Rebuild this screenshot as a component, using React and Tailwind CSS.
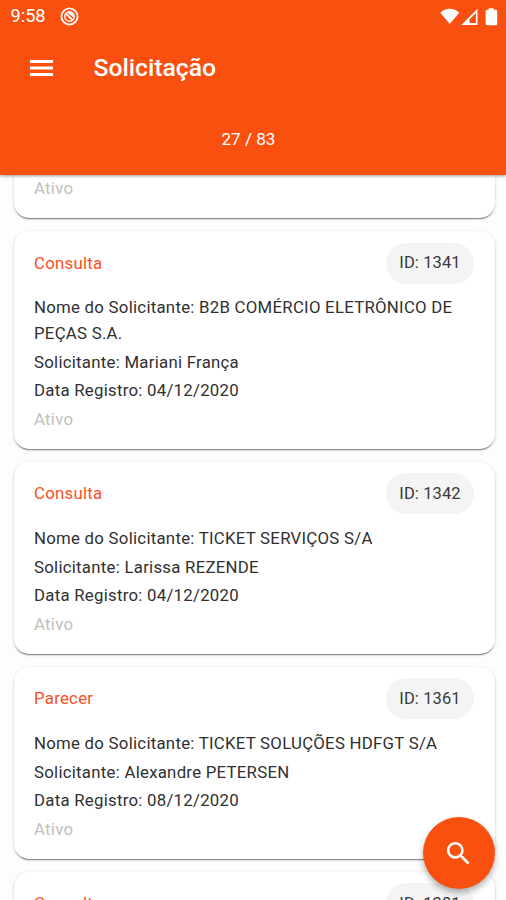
const requests = [
  {
    type: "Consulta",
    id: 1341,
    name: "B2B COMÉRCIO ELETRÔNICO DE PEÇAS S.A.",
    person: "Mariani França",
    date: "04/12/2020",
  },
  { type: "Consulta", id: 1342, name: "TICKET SERVIÇOS S/A", person: "Larissa REZENDE", date: "04/12/2020" },
  { type: "Parecer", id: 1361, name: "TICKET SOLUÇÕES HDFGT S/A", person: "Alexandre PETERSEN", date: "08/12/2020" },
  { type: "Consulta", id: 1381 },
];

const cardStyle =
  "shrink-0 rounded-[15px] bg-white px-[20.5px] shadow-[0_2px_1px_-1px_rgba(0,0,0,0.35),0_1px_2px_rgba(0,0,0,0.2),0_1px_4px_rgba(0,0,0,0.08)]";

function Line({ children, muted }) {
  return (
    <p className={`py-[1.4px] leading-[25.7px] ${muted ? "text-[#c0c0c0]" : "text-[#303030]"}`}>{children}</p>
  );
}

function Card({ item }) {
  return (
    <article className={`${cardStyle} pt-[11.8px] pb-[15px]`}>
      <div className="mb-[10.3px] flex h-[41px] items-center justify-between">
        <h2 className="text-[#fb4f24]">{item.type}</h2>
        <span className="flex h-[41px] w-[88px] items-center justify-center rounded-full bg-[#f4f4f4] pt-[1px] text-[16.5px] tracking-[0.1px] text-[#3a3a3a]">
          {`ID: ${item.id}`}
        </span>
      </div>
      {item.name && (
        <>
          <Line>{`Nome do Solicitante: ${item.name}`}</Line>
          <Line>{`Solicitante: ${item.person}`}</Line>
          <Line>{`Data Registro: ${item.date}`}</Line>
          <Line muted>Ativo</Line>
        </>
      )}
    </article>
  );
}

function StatusBar() {
  return (
    <div className="flex h-[33px] items-center pl-[10.5px] pr-[8px] text-white">
      <span className="text-[18.2px] leading-none tracking-[0px]">9:58</span>
      <svg className="ml-[14px] h-[19px] w-[19px]" viewBox="0 0 19 19" fill="none" stroke="currentColor">
        <circle cx="9.5" cy="9.5" r="8.1" strokeWidth="1.8" />
        <circle cx="9.5" cy="9.5" r="4.7" strokeWidth="1.4" />
        <path d="M5.2 6.2 13 13.4" strokeWidth="1.8" />
        <path d="M6.5 5.2 9.5 4.4 13.3 6.5 14 10.8z" fill="currentColor" stroke="none" />
      </svg>
      <svg className="ml-auto h-[18px] w-[58px]" viewBox="0 0 58 18" fill="currentColor">
        <path d="M.3 4.7C5.5-.7 14-.7 19.2 4.7L9.75 16z" />
        <path fillRule="evenodd" d="M21.300 17 37.500 .7V17zM29.600 15V11.200L35.900 4.900V15z" />
        <path d="M48.700 .3h5v1.500h2q1.500 0 1.500 1.500v12.400q0 1.500-1.500 1.500h-8.600q-1.500 0-1.500-1.500v-12.400q0-1.500 1.500-1.500h1.600z" />
      </svg>
    </div>
  );
}

export default function App() {
  return (
    <div className="relative flex h-[900px] w-[506px] flex-col overflow-hidden bg-[#fdfdfd] font-['Roboto',sans-serif] text-[16.8px] tracking-[0.26px]">
      <header className="z-10 h-[175px] shrink-0 bg-[#fa500f] text-white shadow-[0_1px_3px_rgba(0,0,0,0.4)]">
        <StatusBar />
        <div className="flex h-[70px] items-center pl-[30px]">
          <svg className="h-[16px] w-[23px]" viewBox="0 0 23 16" fill="currentColor">
            <path d="M0 0h23v3H0zM0 6.500h23v3H0zM0 13h23v3H0z" />
          </svg>
          <h1 className="ml-[40.5px] text-[24.7px] font-medium leading-none tracking-[0px]">Solicitação</h1>
        </div>
        <p className="mt-[23px] pr-[9px] text-center text-[17.1px] leading-[26px] tracking-[0px]">27 / 83</p>
      </header>
      <main className="flex min-h-0 flex-1 flex-col gap-[13px] overflow-hidden pl-[13.5px] pr-[11.5px]">
        <div className={`${cardStyle} h-[42.9px] rounded-t-none`}>
          <p className="leading-[26px] text-[#c0c0c0]">Ativo</p>
        </div>
        {requests.map((item) => (
          <Card key={item.id} item={item} />
        ))}
      </main>
      <button
        aria-label="Pesquisar"
        className="absolute right-[11.5px] bottom-[11px] z-20 flex h-[72px] w-[72px] items-center justify-center rounded-full bg-[#fa500f] text-white shadow-[0_4px_6px_rgba(0,0,0,0.3)]"
      >
        <svg className="h-[31px] w-[31px]" viewBox="0 0 24 24" fill="currentColor">
          <path d="M15.500 14h-.79l-.28-.27C15.410 12.590 16 11.110 16 9.500 16 5.910 13.090 3 9.500 3S3 5.910 3 9.500 5.910 16 9.500 16c1.610 0 3.090-.59 4.230-1.570l.27.28v.79l5 4.990L20.490 19l-4.990-5zm-6 0C7.010 14 5 11.990 5 9.500S7.010 5 9.500 5 14 7.010 14 9.500 11.990 14 9.500 14z" />
        </svg>
      </button>
    </div>
  );
}
